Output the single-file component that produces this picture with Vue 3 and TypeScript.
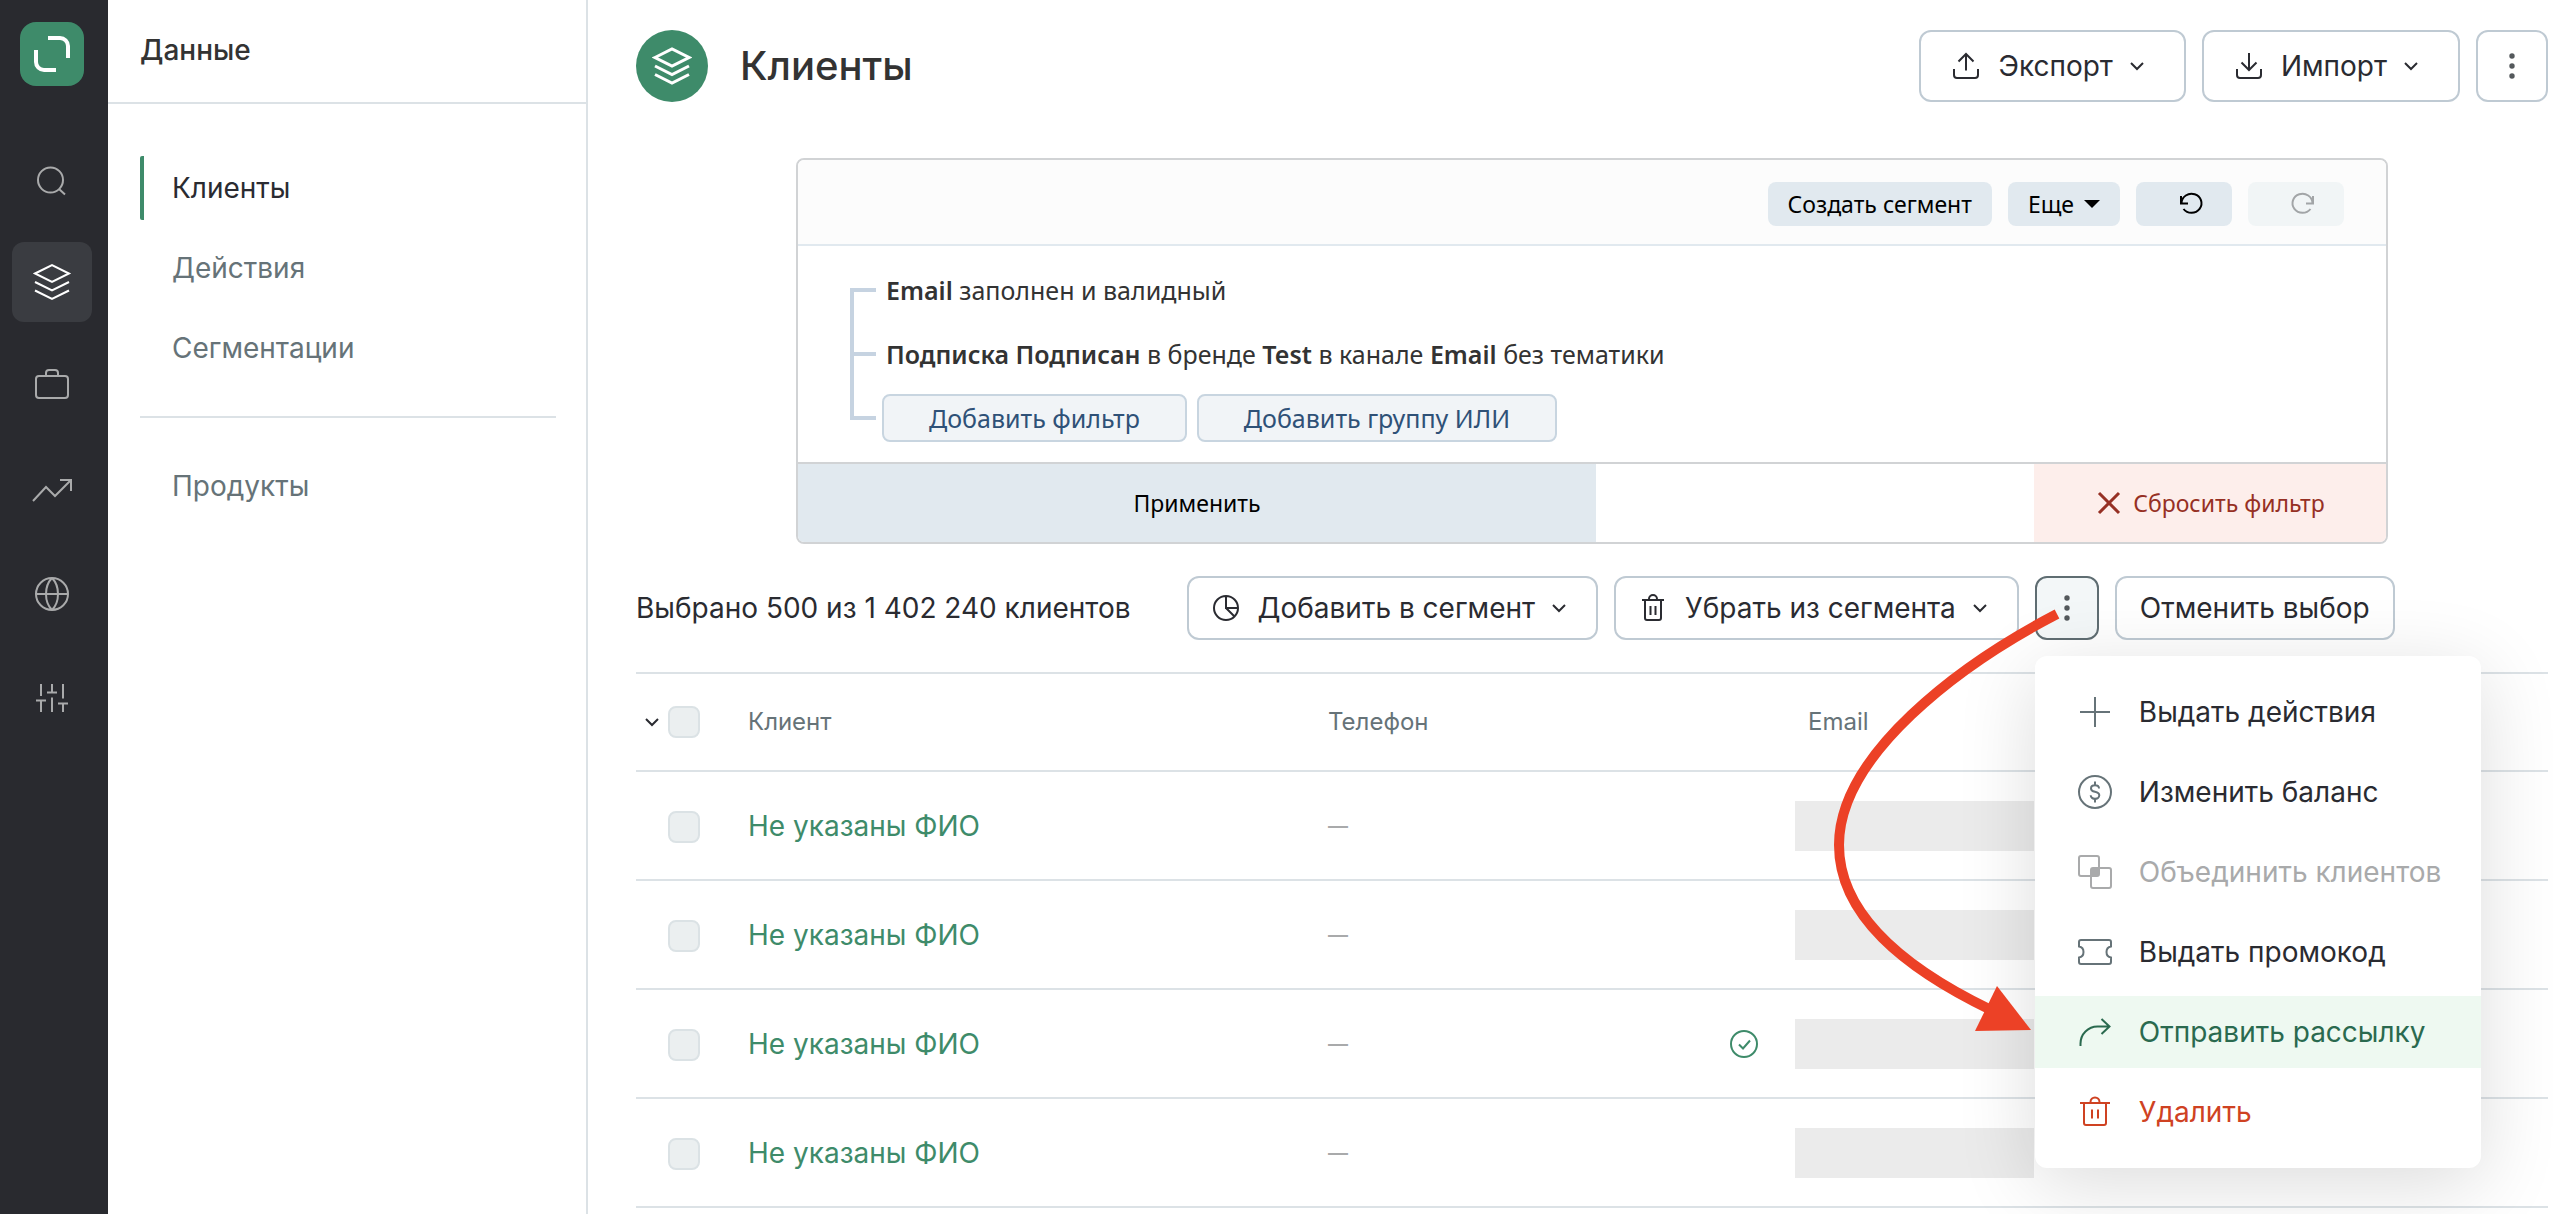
<script setup lang="ts">
import { h, ref } from 'vue'

type IconName =
  | 'search' | 'layers' | 'briefcase' | 'trend' | 'globe' | 'sliders'
  | 'upload' | 'download' | 'chevron' | 'dots' | 'undo' | 'redo' | 'close'
  | 'pie' | 'bin' | 'check' | 'plus' | 'dollar' | 'merge' | 'ticket' | 'share' | 'trash'

interface IconDef {
  size: number
  stroke?: number
  d: string
  fill?: string
}

const icons: Record<IconName, IconDef> = {
  search: { size: 40, d: 'M31 22a12.5 12.5 0 1 1-25 0a12.5 12.5 0 1 1 25 0M27 31l6 5.5' },
  layers: { size: 40, d: 'M3 11.5 20 3l17 8.5L20 20zM3 20l17 8.5L37 20M3 28.5 20 37l17-8.5' },
  briefcase: { size: 40, d: 'M7 10h26a3 3 0 0 1 3 3v16a3 3 0 0 1-3 3H7a3 3 0 0 1-3-3V13a3 3 0 0 1 3-3zM14 10V7a3 3 0 0 1 3-3h6a3 3 0 0 1 3 3v3' },
  trend: { size: 40, d: 'M1 31 14 17l9 9L39 10M28 10h11v11' },
  globe: { size: 40, d: 'M36 20a16 16 0 1 1-32 0a16 16 0 1 1 32 0M4 20h32M20 4c8 8 8 24 0 32M20 4c-8 8-8 24 0 32' },
  sliders: { size: 40, d: 'M9 6v12M4 22.500h10M9 22.500V34M20 6v8.500M15 14.500h10M20 19.500V34M31 6v14.500M26 25.500h10M31 25.500V34' },
  upload: { size: 28, d: 'M2 17v6a3 3 0 0 0 3 3h18a3 3 0 0 0 3-3v-6M14 18.500V2M6.500 9.500 14 2l7.500 7.500' },
  download: { size: 28, d: 'M2 17v6a3 3 0 0 0 3 3h18a3 3 0 0 0 3-3v-6M14 1v17M6.500 10.500 14 18l7.500-7.500' },
  chevron: { size: 28, d: 'm8 11 6 6 6-6' },
  dots: { size: 28, stroke: 0, d: '', fill: 'M11.300 4a2.700 2.700 0 1 0 5.400 0a2.700 2.700 0 1 0-5.400 0M11.300 14a2.700 2.700 0 1 0 5.400 0a2.700 2.700 0 1 0-5.400 0M11.300 24a2.700 2.700 0 1 0 5.400 0a2.700 2.700 0 1 0-5.400 0' },
  undo: { size: 28, d: 'M4 6v7.500h7M4.500 13A10 9.500 0 1 1 6.500 19' },
  redo: { size: 28, d: 'M24 6v7.500h-7M23.500 13A10 9.500 0 1 0 21.500 19' },
  close: { size: 28, stroke: 3, d: 'm4 4 20 20M24 4 4 24' },
  pie: { size: 28, d: 'M26 14a12 12 0 1 1-24 0a12 12 0 1 1 24 0M14 2v12h12M14 14l8.500 8.500' },
  bin: { size: 28, d: 'M3 6h22M10 6V5a4 4 0 0 1 8 0v1M6 6v18a2 2 0 0 0 2 2h12a2 2 0 0 0 2-2V6M11.500 12v9M16.500 12v9' },
  check: { size: 28, d: 'M27 14a13 13 0 1 1-26 0a13 13 0 1 1 26 0M9 14.500l4 4 7-8' },
  plus: { size: 36, d: 'M18 3v30M3 18h30' },
  dollar: { size: 36, d: 'M34 18a16 16 0 1 1-32 0a16 16 0 1 1 32 0M22 14.500c0-2-1.800-3.300-4-3.300s-4 1.300-4 3.200 1.800 2.900 4 3.400 4.300 1.400 4.300 3.500-2 3.500-4.300 3.500-4.300-1.400-4.300-3.500M18 7.500v3.700M18 24.800v3.700' },
  merge: {
    size: 36,
    d: 'M4 2h16a2 2 0 0 1 2 2v16a2 2 0 0 1-2 2H4a2 2 0 0 1-2-2V4a2 2 0 0 1 2-2zM16 14h16a2 2 0 0 1 2 2v16a2 2 0 0 1-2 2H16a2 2 0 0 1-2-2V16a2 2 0 0 1 2-2z',
    fill: 'M16 14h6v6a2 2 0 0 1-2 2h-6v-6a2 2 0 0 1 2-2z',
  },
  ticket: { size: 36, d: 'M4 6h28a2 2 0 0 1 2 2v4.500c-6 1-6 10 0 11V28a2 2 0 0 1-2 2H4a2 2 0 0 1-2-2v-4.500c6-1 6-10 0-11V8a2 2 0 0 1 2-2z' },
  share: { size: 36, d: 'M3.500 32v-2.500a17 17 0 0 1 17-17h12M24.500 5l8 7.500-8 7.500' },
  trash: { size: 36, d: 'M3 9h30M13.500 9V8a4.500 4.500 0 0 1 9 0v1M7 9v20a2 2 0 0 0 2 2h18a2 2 0 0 0 2-2V9M15 15.500v9M21 15.500v9' },
}

const Icon = (props: { name: IconName; stroke?: number }) => {
  const def = icons[props.name]
  return h(
    'svg',
    { width: def.size, height: def.size, viewBox: `0 0 ${def.size} ${def.size}`, 'aria-hidden': 'true' },
    [
      h('path', { d: def.d, fill: 'none', stroke: 'currentColor', 'stroke-width': props.stroke ?? def.stroke ?? 2 }),
      def.fill ? h('path', { d: def.fill, fill: 'currentColor' }) : null,
    ],
  )
}
Icon.props = ['name', 'stroke']

const rail: { icon: IconName; label: string; active?: boolean }[] = [
  { icon: 'search', label: 'Поиск' },
  { icon: 'layers', label: 'Данные', active: true },
  { icon: 'briefcase', label: 'Кампании' },
  { icon: 'trend', label: 'Отчёты' },
  { icon: 'globe', label: 'Сайт' },
  { icon: 'sliders', label: 'Настройки' },
]

const sections = ['Клиенты', 'Действия', 'Сегментации']
const current = ref('Клиенты')

const menu: { icon: IconName; label: string; kind?: string }[] = [
  { icon: 'plus', label: 'Выдать действия' },
  { icon: 'dollar', label: 'Изменить баланс' },
  { icon: 'merge', label: 'Объединить клиентов', kind: 'off' },
  { icon: 'ticket', label: 'Выдать промокод' },
  { icon: 'share', label: 'Отправить рассылку', kind: 'hover' },
  { icon: 'trash', label: 'Удалить', kind: 'danger' },
]

const clients = [
  { id: 1, name: 'Не указаны ФИО', phone: '—', confirmed: false },
  { id: 2, name: 'Не указаны ФИО', phone: '—', confirmed: false },
  { id: 3, name: 'Не указаны ФИО', phone: '—', confirmed: true },
  { id: 4, name: 'Не указаны ФИО', phone: '—', confirmed: false },
]

const menuOpen = ref(true)
</script>

<template>
  <div class="shell">
    <nav class="rail" aria-label="Разделы">
      <a class="logo" href="#" aria-label="Главная">
        <svg width="64" height="64" viewBox="0 0 64 64" fill="none" stroke="#fff" stroke-width="4" aria-hidden="true">
          <path d="M28 16h12a8 8 0 0 1 8 8v12M16 28v12a8 8 0 0 0 8 8h12" />
        </svg>
      </a>
      <a
        v-for="item in rail"
        :key="item.icon"
        href="#"
        class="rail-item"
        :class="{ active: item.active }"
        :aria-label="item.label"
      >
        <Icon :name="item.icon" />
      </a>
    </nav>

    <aside class="side">
      <div class="side-title">Данные</div>
      <nav class="side-nav" aria-label="Данные">
        <a
          v-for="s in sections"
          :key="s"
          href="#"
          class="side-link"
          :class="{ active: s === current }"
          @click.prevent="current = s"
        >{{ s }}</a>
        <hr class="side-rule" />
        <a href="#" class="side-link">Продукты</a>
      </nav>
    </aside>

    <main class="main">
      <header class="head">
        <span class="badge"><Icon name="layers" :stroke="3" /></span>
        <h1 class="title">Клиенты</h1>
        <button type="button" class="btn large"><Icon name="upload" /><span>Экспорт</span><Icon name="chevron" class="chev" /></button>
        <button type="button" class="btn large"><Icon name="download" /><span>Импорт</span><Icon name="chevron" class="chev" /></button>
        <button type="button" class="btn large square" aria-label="Ещё"><Icon name="dots" class="dots" /></button>
      </header>

      <section class="filter" aria-label="Фильтр">
        <div class="filter-tools">
          <button type="button" class="tool">Создать сегмент</button>
          <button type="button" class="tool">Еще<span class="caret"></span></button>
          <button type="button" class="tool step" aria-label="Отменить"><Icon name="undo" /></button>
          <button type="button" class="tool step" aria-label="Повторить" disabled><Icon name="redo" /></button>
        </div>
        <ul class="tree">
          <li class="rule"><b>Email</b> заполнен и валидный</li>
          <li class="rule"><b>Подписка Подписан</b> в бренде <b>Test</b> в канале <b>Email</b> без тематики</li>
          <li class="rule adders">
            <button type="button" class="add">Добавить фильтр</button>
            <button type="button" class="add">Добавить группу ИЛИ</button>
          </li>
        </ul>
        <div class="filter-foot">
          <button type="button" class="apply">Применить</button>
          <button type="button" class="reset"><Icon name="close" />Сбросить фильтр</button>
        </div>
      </section>

      <div class="bulk">
        <span class="count">Выбрано 500 из 1 402 240 клиентов</span>
        <button type="button" class="btn"><Icon name="pie" /><span>Добавить в сегмент</span><Icon name="chevron" class="chev" /></button>
        <button type="button" class="btn"><Icon name="bin" /><span>Убрать из сегмента</span><Icon name="chevron" class="chev" /></button>
        <div class="more">
          <button type="button" class="btn square pressed" aria-label="Другие действия" :aria-expanded="menuOpen" @click="menuOpen = !menuOpen">
            <Icon name="dots" class="dots" />
          </button>
          <ul v-if="menuOpen" class="menu">
            <li v-for="m in menu" :key="m.label">
              <button type="button" class="menu-item" :class="m.kind" :disabled="m.kind === 'off'">
                <Icon :name="m.icon" class="menu-icon" />{{ m.label }}
              </button>
            </li>
          </ul>
          <svg class="arrow" width="250" height="440" viewBox="1820 600 250 440" aria-hidden="true">
            <path d="M2058 614C1960 665 1840 755 1840 845C1840 915 1905 968 1992 1010" fill="none" stroke="#ec4126" stroke-width="10" />
            <path d="M1998 986 2032 1030 1976 1031z" fill="#ec4126" />
          </svg>
        </div>
        <button type="button" class="btn">Отменить выбор</button>
      </div>

      <table class="grid">
        <colgroup>
          <col class="c-select" /><col class="c-name" /><col class="c-phone" /><col class="c-state" /><col />
        </colgroup>
        <thead>
          <tr>
            <th>
              <span class="pick">
                <Icon name="chevron" class="pick-chev" />
                <input type="checkbox" class="box" aria-label="Выбрать всех" disabled />
              </span>
            </th>
            <th>Клиент</th>
            <th>Телефон</th>
            <th></th>
            <th class="email-head">Email</th>
          </tr>
        </thead>
        <tbody>
          <tr v-for="c in clients" :key="c.id">
            <td><span class="pick row"><input type="checkbox" class="box" :aria-label="'Выбрать клиента ' + c.id" disabled /></span></td>
            <td><a href="#" class="name">{{ c.name }}</a></td>
            <td class="phone">{{ c.phone }}</td>
            <td><Icon v-if="c.confirmed" name="check" class="state" /></td>
            <td><div class="hidden-email"></div></td>
          </tr>
        </tbody>
      </table>
    </main>
  </div>
</template>

<style>
body {
  margin: 0;
  background: #fff;
}
</style>

<style scoped>
.shell,
.shell * {
  box-sizing: border-box;
}
.shell {
  display: flex;
  min-height: 100vh;
  overflow: hidden;
  font-family: Inter, "Liberation Sans", sans-serif;
  font-size: 28px;
  line-height: 40px;
  color: #2a2b31;
}
.shell svg {
  display: block;
  flex: none;
}
button {
  font: inherit;
  color: inherit;
  margin: 0;
  padding: 0;
  border: 0;
  background: none;
}
a {
  text-decoration: none;
}

.rail {
  flex: none;
  width: 108px;
  padding: 22px 4px 0 0;
  display: flex;
  flex-direction: column;
  align-items: center;
  gap: 24px;
  background: #292a2f;
}
.logo {
  width: 64px;
  height: 64px;
  margin-bottom: 28px;
  border-radius: 16px;
  background: #3e8b6a;
}
.rail-item {
  width: 80px;
  height: 80px;
  display: flex;
  align-items: center;
  justify-content: center;
  border-radius: 12px;
  color: #a9aaab;
}
.rail-item.active {
  background: #3a3c41;
  color: #fff;
}

.side {
  flex: none;
  width: 480px;
  border-right: 2px solid #dce2e6;
}
.side-title {
  height: 104px;
  padding: 30px 32px 0;
  border-bottom: 2px solid #dce2e6;
  font-weight: 500;
  color: #333;
}
.side-nav {
  padding: 52px 30px 0 32px;
  display: flex;
  flex-direction: column;
  gap: 16px;
}
.side-link {
  height: 64px;
  padding-left: 28px;
  border-left: 4px solid transparent;
  line-height: 64px;
  color: #667378;
}
.side-link.active {
  border-left-color: #3e8b6a;
  border-radius: 2px;
  color: #2a2b31;
}
.side-rule {
  width: 100%;
  height: 2px;
  margin: 20px 0;
  border: 0;
  background: #dce2e6;
}

.main {
  flex: 1;
  min-width: 0;
  padding: 30px 24px 0 48px;
}
.head {
  display: flex;
  align-items: center;
  gap: 16px;
}
.badge {
  width: 72px;
  height: 72px;
  display: flex;
  align-items: center;
  justify-content: center;
  border-radius: 50%;
  background: #3e8b6a;
  color: #fff;
}
.title {
  flex: 1;
  margin: 0;
  padding-left: 16px;
  font-size: 40px;
  line-height: 48px;
  font-weight: 500;
  color: #333;
}
.btn {
  height: 64px;
  padding: 0 23px;
  display: flex;
  align-items: center;
  border: 2px solid #bfcad3;
  border-radius: 12px;
  background: #fff;
  white-space: nowrap;
}
.btn span {
  margin-left: 18px;
}
.chev {
  margin-left: 10px;
}
.large {
  height: 72px;
  padding: 0 33px 0 31px;
}
.square {
  width: 64px;
  padding: 0;
  justify-content: center;
}
.large.square {
  width: 72px;
}
.dots {
  color: #54595c;
}
.pressed {
  border-color: #5f6d72;
  background: #f3f7f8;
}

.filter {
  max-width: 1592px;
  margin: 56px auto 0;
  border: 2px solid #d1d3d5;
  border-radius: 8px;
  overflow: hidden;
  font-family: "Noto Sans", "Open Sans", sans-serif;
  font-size: 23px;
  line-height: 32px;
  color: #333;
}
.filter-tools {
  height: 86px;
  padding: 22px 42px 0;
  display: flex;
  justify-content: flex-end;
  gap: 16px;
  background: #fcfcfc;
  border-bottom: 2px solid #e1e9ef;
}
.tool {
  height: 44px;
  padding: 0 20px;
  display: flex;
  align-items: center;
  gap: 10px;
  border-radius: 8px;
  background: #e1e9ef;
  color: #000;
}
.caret {
  border: 8px solid transparent;
  border-top-color: #000;
  border-bottom: 0;
}
.step {
  width: 96px;
  padding: 0 0 0 14px;
  justify-content: center;
}
.step:disabled {
  background: #f1f5f6;
  color: #a2a5a7;
}
.tree {
  margin: 0;
  padding: 20px 52px 20px;
  list-style: none;
  font-size: 25px;
}
.rule {
  position: relative;
  height: 48px;
  margin-bottom: 16px;
  padding-left: 36px;
  line-height: 48px;
}
.rule b {
  font-weight: 600;
}
.rule::before {
  content: "";
  position: absolute;
  left: 0;
  top: 22px;
  width: 26px;
  height: 4px;
  background: #c6d3e1;
}
.rule:not(:last-child)::after {
  content: "";
  position: absolute;
  left: 0;
  top: 22px;
  width: 4px;
  height: 68px;
  background: #c6d3e1;
}
.rule:last-child {
  margin-bottom: 0;
}
.adders {
  padding-left: 32px;
  display: flex;
  gap: 10px;
}
.add {
  height: 48px;
  padding: 0 45px;
  border: 2px solid #c8d5e0;
  border-radius: 8px;
  background: #f1f4f7;
  line-height: 44px;
  color: #2f5177;
}
.filter-foot {
  display: flex;
  justify-content: space-between;
  border-top: 2px solid #d1d3d5;
}
.apply {
  width: calc(50% + 4px);
  height: 78px;
  background: #e1e9ef;
  color: #000;
}
.reset {
  width: 352px;
  height: 78px;
  display: flex;
  align-items: center;
  justify-content: center;
  gap: 10px;
  background: #fdeeeb;
  color: #963024;
}

.bulk {
  margin: 32px 0;
  display: flex;
  align-items: center;
  gap: 16px;
}
.count {
  margin-right: 40px;
  white-space: nowrap;
}
.more {
  position: relative;
}
.menu {
  position: absolute;
  z-index: 1;
  left: 0;
  top: 80px;
  width: 446px;
  margin: 0;
  padding: 20px 0;
  display: flex;
  flex-direction: column;
  gap: 8px;
  border-radius: 12px;
  background: #fff;
  box-shadow: 0 16px 80px rgba(0, 0, 0, 0.14);
  list-style: none;
}
.menu-item {
  width: 100%;
  height: 72px;
  padding-left: 42px;
  display: flex;
  align-items: center;
  gap: 26px;
  white-space: nowrap;
}
.menu-icon {
  color: #667378;
}
.menu-item.off,
.off .menu-icon {
  color: #a9aaab;
}
.menu-item.hover {
  background: #eef9f1;
}
.menu-item.hover,
.hover .menu-icon {
  color: #2a6a4f;
}
.menu-item.danger,
.danger .menu-icon {
  color: #cf4222;
}
.arrow {
  position: absolute;
  z-index: 2;
  left: -216px;
  top: 24px;
  pointer-events: none;
}

.grid {
  width: 100%;
  table-layout: fixed;
  border-collapse: separate;
  border-spacing: 0;
  border-top: 2px solid #dce2e6;
}
.c-select {
  width: 112px;
}
.c-name {
  width: 580px;
}
.c-phone {
  width: 402px;
}
.c-state {
  width: 65px;
}
th,
td {
  padding: 0;
  border-bottom: 2px solid #dce2e6;
  text-align: left;
  vertical-align: middle;
}
th {
  height: 98px;
  font-size: 24px;
  font-weight: 400;
  color: #667378;
}
td {
  height: 109px;
}
.email-head {
  padding-left: 13px;
}
.pick {
  display: flex;
  align-items: center;
  padding-left: 2px;
}
.pick-chev {
  margin: 0 2px 0 0;
  color: #2a2b31;
}
.pick.row {
  padding: 2px 0 0 32px;
}
.box {
  appearance: none;
  width: 32px;
  height: 32px;
  margin: 0;
  border: 2px solid #dbe2e5;
  border-radius: 8px;
  background: #ebeff0;
}
.name {
  color: #3e8b6a;
}
.phone {
  font-size: 20px;
  font-weight: 500;
  color: #a9aaab;
}
.state {
  color: #3e8b6a;
}
.hidden-email {
  width: 239px;
  height: 50px;
  background: #ebebeb;
}
</style>
